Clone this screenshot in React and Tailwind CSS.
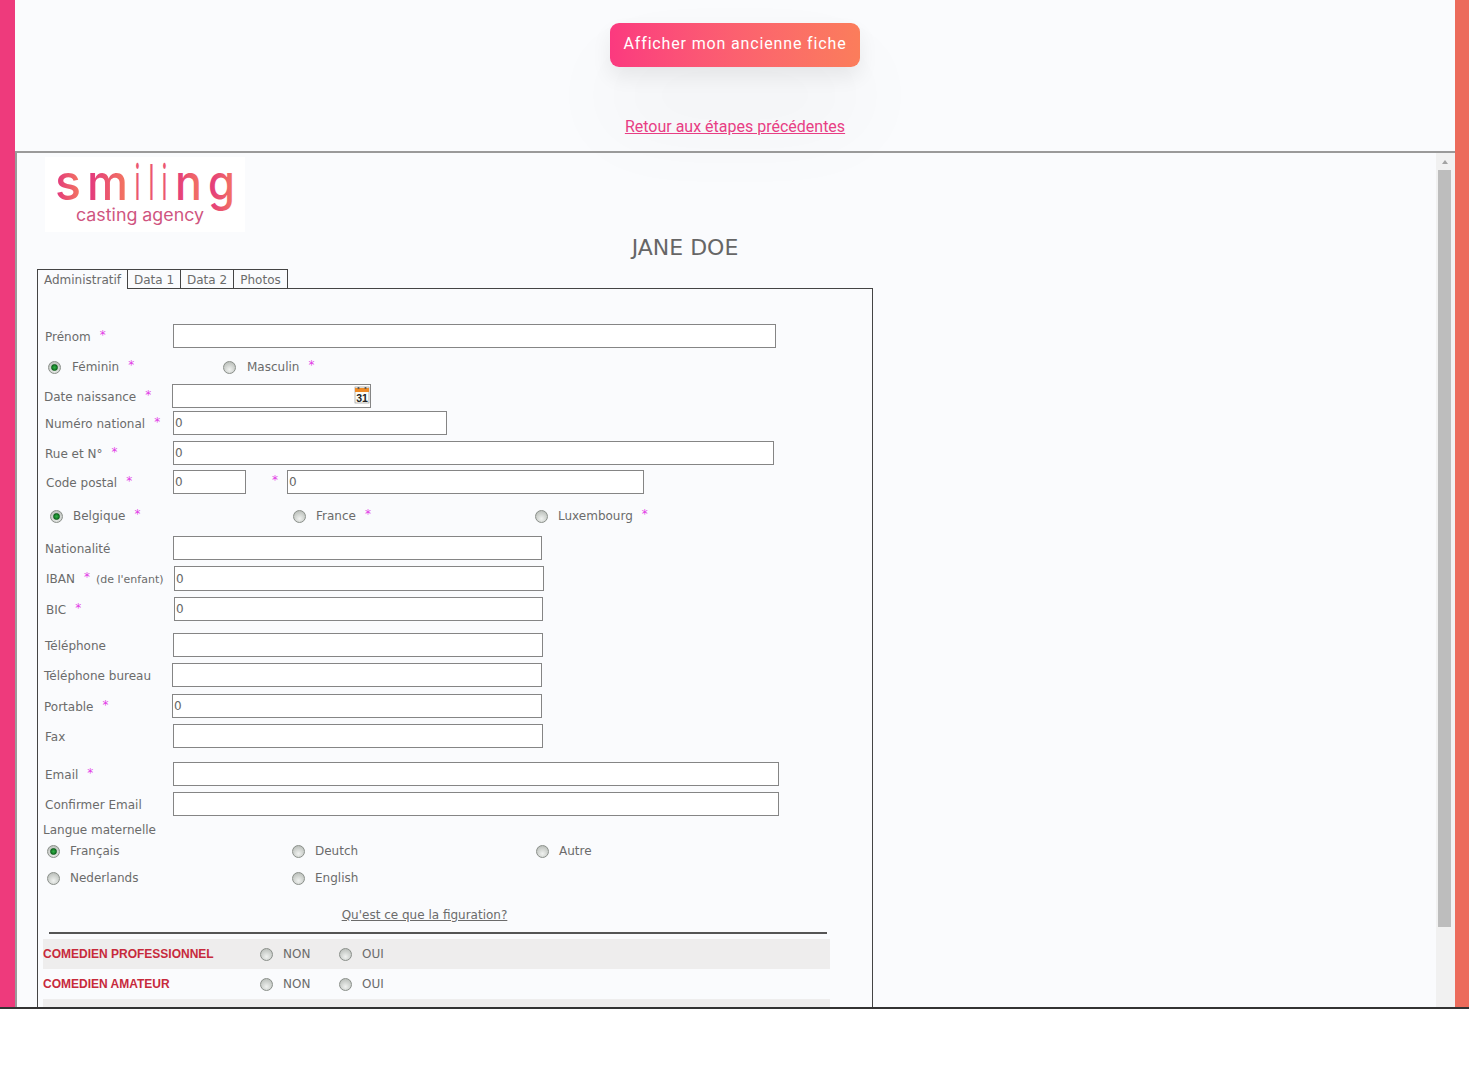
const font = { fontFamily: '"DejaVu Sans", sans-serif' };

const Star = ({ className = 'ml-[9px]' }) => <span className={`text-[#e23ce6] relative -top-[2px] text-[12px] ${className}`}>*</span>;

const Radio = ({ checked }) => (
  <span className="inline-flex shrink-0 items-center justify-center w-[13px] h-[13px] rounded-full border border-[#8a8f8a] bg-[radial-gradient(circle_at_50%_70%,#f0f2f0,#b0b5b0)]">
    {checked && <span className="w-[7px] h-[7px] rounded-full bg-[radial-gradient(circle_at_50%_50%,#2fae45,#0b6b1d)] border border-[#0b5c18]" />}
  </span>
);

const Field = ({ rowClass = '', heightClass = 'h-[24px]', labelClass, inputClass, value = '', icon, after, children }) => (
  <div className={`flex items-center ${heightClass} ${rowClass}`}>
    <div className={`shrink-0 whitespace-nowrap pt-[1px] ${labelClass}`}>{children}</div>
    <div className={`relative h-full shrink-0 ${inputClass}`}>
      <input readOnly value={value} className="block w-full h-full border border-[#858585] bg-white pl-[1px] text-[12px] text-[#666] outline-none" style={font} />
      {icon}
    </div>
    {after}
  </div>
);

const Option = ({ className = '', gapClass = 'ml-[10px]', checked, star, children }) => (
  <div className={`flex items-center shrink-0 whitespace-nowrap ${className}`}>
    <Radio checked={checked} />
    <span className={gapClass}>{children}</span>
    {star && <Star />}
  </div>
);

const Calendar = () => (
  <svg width="16" height="18" viewBox="0 0 16 18" className="absolute right-[1px] top-[2px]">
    <rect x="1" y="1" width="14" height="16" fill="#fdfdf6" stroke="#999" strokeWidth="0.7" />
    <rect x="1" y="2" width="14" height="4" fill="#ee8a24" />
    <circle cx="4.5" cy="2" r="1.1" fill="#555" />
    <circle cx="11.5" cy="2" r="1.1" fill="#555" />
    <text x="8" y="15.5" textAnchor="middle" fontSize="10.5" fontWeight="700" fill="#222" fontFamily="Liberation Sans, sans-serif">31</text>
  </svg>
);

const Logo = () => {
  const letters = [
    ['s', 55, 26],
    ['m', 87, 41],
    ['i', 135, 5],
    ['l', 149, 5],
    ['i', 162, 5],
    ['n', 175, 27],
    ['g', 208, 27],
  ];
  return (
    <div className="w-[200px] h-[75px] bg-white ml-[28px] mt-[4px]">
      <svg width="200" height="75" viewBox="45 157 200 75">
        <defs>
          <linearGradient id="lg" x1="0" y1="0" x2="1" y2="0">
            <stop offset="0" stopColor="#e2357f" />
            <stop offset="1" stopColor="#f4795f" />
          </linearGradient>
        </defs>
        {letters.map(([c, x, w], i) => (
          <text key={i} x={x} y="200" fontSize="50" fontWeight="500" fontFamily="Inter, sans-serif" fill="url(#lg)" textLength={w} lengthAdjust="spacingAndGlyphs">{c}</text>
        ))}
        <text x="76" y="221" fontSize="17" fontFamily="Inter, sans-serif" fill="#cf5580" textLength="128" lengthAdjust="spacingAndGlyphs">casting agency</text>
      </svg>
    </div>
  );
};

const Tabs = () => (
  <div className="flex ml-[20px] h-[20px] relative z-10">
    <div className="h-[20px] w-[91px] border border-b-0 border-[#444] bg-[#fafbfd] text-center leading-[20px]">Administratif</div>
    <div className="h-[20px] w-[54px] -ml-px border border-[#444] text-center leading-[20px]">Data 1</div>
    <div className="h-[20px] w-[54px] -ml-px border border-[#444] text-center leading-[20px]">Data 2</div>
    <div className="h-[20px] w-[55px] -ml-px border border-[#444] text-center leading-[20px]">Photos</div>
  </div>
);

const ComedienRow = ({ label, grey }) => (
  <div className={`flex items-center h-[30px] ml-[5px] w-[787px] ${grey ? 'bg-[#eeeded]' : ''}`}>
    <span className="w-[217px] shrink-0 text-[12px] font-bold text-[#c72a3c]" style={{ fontFamily: '"Liberation Sans", sans-serif' }}>{label}</span>
    {label && (
      <>
        <Radio />
        <span className="ml-[10px] w-[56px]">NON</span>
        <Radio />
        <span className="ml-[10px]">OUI</span>
      </>
    )}
  </div>
);

const App = () => {
  return (
    <div className="bg-white h-[1080px] overflow-hidden">
      <div className="flex h-[1009px] border-b-2 border-[#333]">
        <div className="w-[15px] shrink-0 bg-[#ee3a7c]" />
        <div className="flex-1 flex flex-col bg-[#fafbfd] min-w-0">
          {/* haut de page */}
          <div className="h-[151px] shrink-0 flex flex-col items-center" style={{ fontFamily: 'Roboto, sans-serif' }}>
            <button className="mt-[23px] pb-[3px] w-[250px] h-[44px] rounded-[9px] bg-gradient-to-r from-[#fb397f] to-[#fb7d5b] text-white text-[16px] font-normal tracking-[0.85px] shadow-[0_10px_20px_rgba(0,0,0,0.07),0_50px_90px_rgba(0,0,0,0.06)]">
              Afficher mon ancienne fiche
            </button>
            <a href="#" className="mt-[50px] text-[16px] leading-[20px] font-normal underline text-[#e83e84]">Retour aux étapes précédentes</a>
          </div>

          {/* iframe */}
          <div className="flex-1 min-h-0 flex border-t-2 border-l-2 border-[#9a9a9a]">
            <div className="flex-1 min-w-0 overflow-hidden text-[12px] text-[#6b6b6b]" style={font}>
              <Logo />
              <h1 className="w-[1336px] mt-[1px] h-[30px] text-center text-[22px] leading-[30px] text-[#666]">JANE DOE</h1>
              <div className="h-[6px]" />
              <Tabs />
              <div className="ml-[20px] -mt-px w-[836px] h-[760px] border border-[#444]">
                <Field rowClass="mt-[35px]" labelClass="w-[135px] pl-[7px]" inputClass="w-[603px]">Prénom<Star /></Field>

                <div className="flex items-center h-[36px] pt-[2px]">
                  <Option className="ml-[10px] w-[175px]" gapClass="ml-[11px]" checked star>Féminin</Option>
                  <Option gapClass="ml-[11px]" star>Masculin</Option>
                </div>

                <Field labelClass="w-[134px] pl-[6px]" inputClass="w-[199px]" icon={<Calendar />}>Date naissance<Star /></Field>
                <Field rowClass="mt-[3px]" labelClass="w-[135px] pl-[7px]" inputClass="w-[274px]" value="0">Numéro national<Star /></Field>
                <Field rowClass="mt-[6px]" labelClass="w-[135px] pl-[7px]" inputClass="w-[601px]" value="0">Rue et N°<Star /></Field>
                <Field
                  rowClass="mt-[5px]"
                  labelClass="w-[135px] pl-[8px]"
                  inputClass="w-[73px]"
                  value="0"
                  after={
                    <>
                      <Star className="ml-[26px] w-[15px]" />
                      <input readOnly value="0" className="block w-[357px] h-full border border-[#858585] bg-white pl-[1px] text-[12px] text-[#666] outline-none" style={font} />
                    </>
                  }
                >
                  Code postal<Star />
                </Field>

                <div className="flex items-center h-[42px] pt-[2px]">
                  <Option className="ml-[12px] w-[243px]" checked star>Belgique</Option>
                  <Option className="w-[242px]" star>France</Option>
                  <Option star>Luxembourg</Option>
                </div>

                <Field labelClass="w-[135px] pl-[7px]" inputClass="w-[369px]">Nationalité</Field>
                <Field rowClass="mt-[6px]" heightClass="h-[25px]" labelClass="w-[136px] pl-[8px]" inputClass="w-[370px]" value="0">
                  IBAN<Star /><span className="ml-[6px] text-[11px]">(de l'enfant)</span>
                </Field>
                <Field rowClass="mt-[6px]" labelClass="w-[136px] pl-[8px]" inputClass="w-[369px]" value="0">BIC<Star /></Field>

                <Field rowClass="mt-[12px]" labelClass="w-[135px] pl-[7px]" inputClass="w-[370px]">Téléphone</Field>
                <Field rowClass="mt-[6px]" labelClass="w-[134px] pl-[6px]" inputClass="w-[370px]">Téléphone bureau</Field>
                <Field rowClass="mt-[7px]" labelClass="w-[134px] pl-[6px]" inputClass="w-[370px]" value="0">Portable<Star /></Field>
                <Field rowClass="mt-[6px]" labelClass="w-[135px] pl-[7px]" inputClass="w-[370px]">Fax</Field>

                <Field rowClass="mt-[14px]" labelClass="w-[135px] pl-[7px]" inputClass="w-[606px]">Email<Star /></Field>
                <Field rowClass="mt-[6px]" labelClass="w-[135px] pl-[7px]" inputClass="w-[606px]">Confirmer Email</Field>

                <div className="mt-[6px] h-[16px] leading-[16px] pl-[5px]">Langue maternelle</div>
                <div className="flex items-center mt-[5px] h-[16px]">
                  <Option className="ml-[9px] w-[245px]" checked>Français</Option>
                  <Option className="w-[244px]">Deutch</Option>
                  <Option>Autre</Option>
                </div>
                <div className="flex items-center mt-[11px] h-[16px]">
                  <Option className="ml-[9px] w-[245px]">Nederlands</Option>
                  <Option>English</Option>
                </div>

                <div className="mt-[21px] h-[16px] leading-[16px] w-[773px] text-center">
                  <a href="#" className="underline">Qu'est ce que la figuration?</a>
                </div>
                <div className="mt-[9px] ml-[11px] w-[778px] h-[2px] bg-[#555]" />

                <div className="mt-[5px]">
                  <ComedienRow grey label="COMEDIEN PROFESSIONNEL" />
                  <ComedienRow label="COMEDIEN AMATEUR" />
                  <ComedienRow grey />
                </div>
              </div>
            </div>

            {/* scrollbar */}
            <div className="w-[19px] shrink-0 bg-[#f1f1f1] flex flex-col">
              <svg width="6" height="4" viewBox="0 0 6 4" className="mt-[7px] ml-[6px] shrink-0">
                <path d="M3 0 L6 4 L0 4 Z" fill="#a3a3a3" />
              </svg>
              <div className="mt-[6px] ml-[2px] w-[13px] h-[757px] bg-[#bdbdbd]" />
            </div>
          </div>
        </div>
        <div className="w-[14px] shrink-0 bg-[#ec6b5b]" />
      </div>
    </div>
  );
};

export default App;
